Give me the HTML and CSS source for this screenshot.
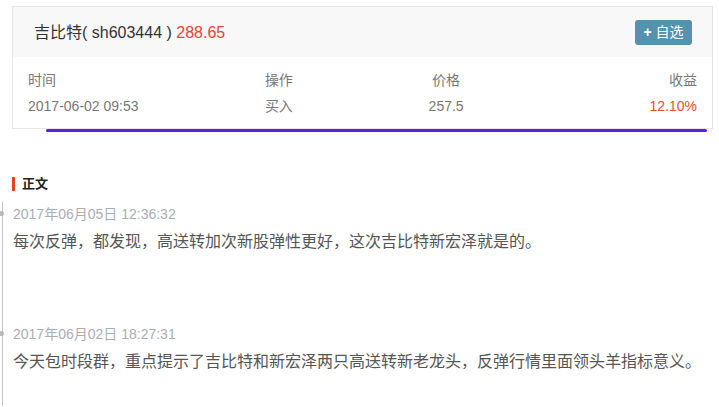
FILE: index.html
```html
<!DOCTYPE html>
<html lang="zh-CN">
<head>
<meta charset="utf-8">
<title>吉比特</title>
<link rel="stylesheet" href="styles.css">
</head>
<body>
<div class="page">
  <div class="card">
    <div class="card-head">
      <div class="title">吉比特( sh603444 ) <span class="price">288.65</span></div>
      <button class="btn-add"><span class="plus">+</span> 自选</button>
    </div>
    <div class="table">
      <div class="cell c-left label">时间</div>
      <div class="cell c-center label">操作</div>
      <div class="cell c-center label">价格</div>
      <div class="cell c-right label">收益</div>
      <div class="cell c-left">2017-06-02 09:53</div>
      <div class="cell c-center">买入</div>
      <div class="cell c-center">257.5</div>
      <div class="cell c-right gain">12.10%</div>
    </div>
    <div class="stroke"></div>
  </div>

  <div class="section-title"><span class="bar"></span>正文</div>

  <div class="timeline">
    <div class="item">
      <span class="dot"></span>
      <div class="time">2017年06月05日 12:36:32</div>
      <div class="content">每次反弹，都发现，高送转加次新股弹性更好，这次吉比特新宏泽就是的。</div>
    </div>
    <div class="item">
      <span class="dot"></span>
      <div class="time">2017年06月02日 18:27:31</div>
      <div class="content">今天包时段群，重点提示了吉比特和新宏泽两只高送转新老龙头，反弹行情里面领头羊指标意义。</div>
    </div>
  </div>
</div>
</body>
</html>
```
FILE: styles.css
```css
* { box-sizing: border-box; }
html, body { margin: 0; padding: 0; background: #fff; }
body {
  font-family: "Liberation Sans", "Noto Sans CJK SC", sans-serif;
  color: #555;
  width: 719px;
  height: 407px;
  overflow: hidden;
}
.page { padding-top: 6px; }
.card {
  position: relative;
  margin-left: 12px;
  width: 701px;
  border: 1px solid #e6e6e6;
  background: #fff;
}
.card-head {
  height: 50px;
  background: #f8f8f8;
  display: flex;
  align-items: center;
  justify-content: space-between;
  padding: 0 20px 0 21px;
}
.title {
  font-size: 16px;
  line-height: 20px;
  color: #333;
  padding-top: 1px;
}
.price { color: #eb4132; }
.btn-add {
  width: 57px;
  height: 25px;
  border: none;
  border-radius: 3px;
  background: #5592b0;
  color: #fff;
  font-family: inherit;
  font-size: 14px;
  line-height: 25px;
  padding: 0;
  margin-top: 1px;
}
.plus { font-weight: bold; }
.table {
  display: grid;
  grid-template-columns: repeat(4, 1fr);
  grid-auto-rows: 26px;
  padding: 10px 15px 9px;
  font-size: 14px;
  color: #777;
}
.cell { line-height: 26px; white-space: nowrap; }
.c-left { text-align: left; }
.c-center { text-align: center; }
.c-right { text-align: right; }
.gain { color: #ee4b2b; }
.stroke {
  position: absolute;
  left: 33px;
  top: 122px;
  width: 661px;
  height: 3px;
  border-radius: 2px;
  background: #5b21d6;
}
.section-title {
  margin: 48px 0 0 12px;
  display: flex;
  align-items: center;
  font-size: 13px;
  font-weight: bold;
  color: #222;
  line-height: 14px;
  height: 14px;
}
.bar {
  width: 3px;
  height: 14px;
  background: #e8421e;
  margin-right: 7px;
}
.timeline {
  margin: 11px 0 0 2px;
  border-left: 1px solid #c8c8c8;
  padding-left: 10px;
  height: 204px;
}
.item {
  position: relative;
  height: 120px;
  padding-top: 2px;
}
.item:last-child { height: 84px; }
.dot {
  position: absolute;
  left: -14px;
  top: 9px;
  width: 5px;
  height: 5px;
  border-radius: 50%;
  background: #b8b8b8;
}
.time {
  font-size: 14px;
  line-height: 20px;
  color: #a9adb5;
  white-space: nowrap;
}
.content {
  margin-top: 6px;
  font-size: 16px;
  line-height: 24px;
  color: #555;
  white-space: nowrap;
}
```
